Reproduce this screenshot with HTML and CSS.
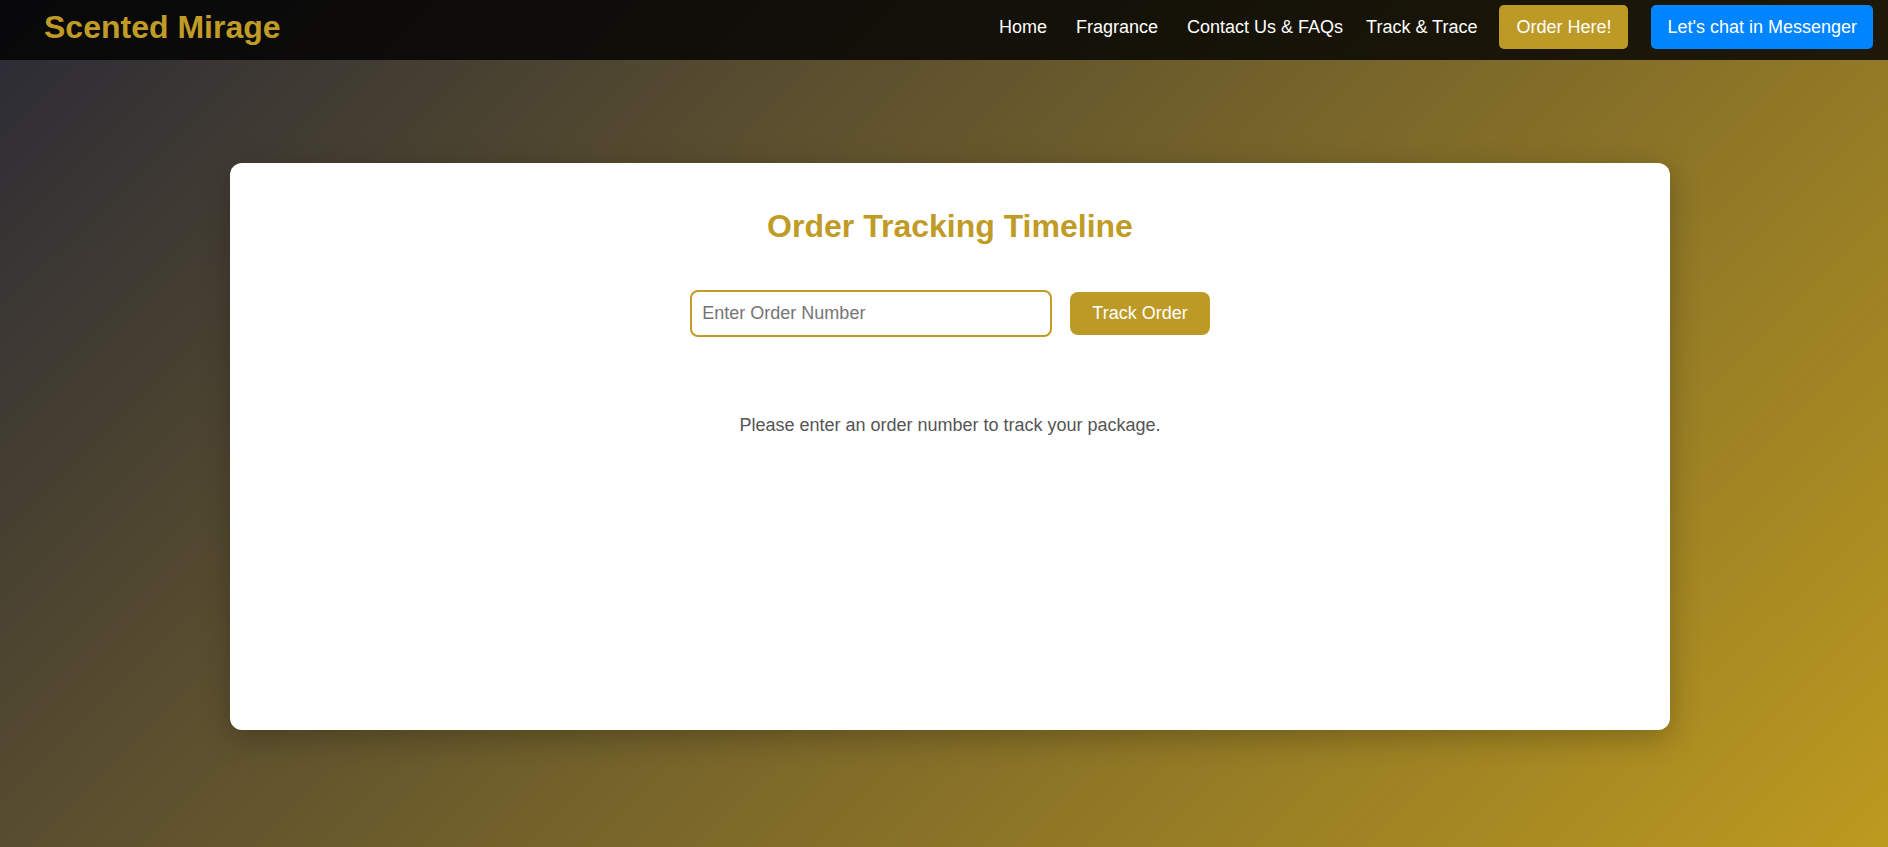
FILE: index.html
```html
<!DOCTYPE html>
<html lang="en">
<head>
<meta charset="UTF-8">
<title>Scented Mirage - Track &amp; Trace</title>
<link rel="stylesheet" href="styles.css">
</head>
<body>
<header class="site-header">
  <a class="logo" href="#">Scented Mirage</a>
  <nav class="nav">
    <a class="nav-link" href="#">Home</a>
    <a class="nav-link nav-link-wide" href="#">Fragrance</a>
    <a class="nav-link nav-link-wide" href="#">Contact Us &amp; FAQs</a>
    <a class="nav-link" href="#">Track &amp; Trace</a>
    <a class="btn-order" href="#">Order Here!</a>
    <a class="btn-messenger" href="#">Let's chat in Messenger</a>
  </nav>
</header>
<main class="main">
  <section class="card">
    <h2 class="card-title">Order Tracking Timeline</h2>
    <form class="track-form">
      <input class="order-input" type="text" placeholder="Enter Order Number">
      <button class="track-btn" type="button">Track Order</button>
    </form>
    <p class="message">Please enter an order number to track your package.</p>
  </section>
</main>
</body>
</html>
```
FILE: styles.css
```css
html, body {
  margin: 0;
  padding: 0;
  min-height: 100%;
}
body {
  font-family: "Liberation Sans", Arial, sans-serif;
  min-height: 100vh;
  background: linear-gradient(135deg, #2a2a36 0%, #bd9a1f 100%);
  background-attachment: fixed;
}
.site-header {
  height: 60px;
  box-sizing: border-box;
  padding: 5px 15px 11px 44px;
  display: flex;
  align-items: center;
  justify-content: space-between;
  background: rgba(0, 0, 0, 0.8);
}
.logo {
  font-size: 32px;
  font-weight: bold;
  color: #c09b26;
  text-decoration: none;
}
.nav {
  display: flex;
  align-items: center;
}
.nav-link {
  color: #fff;
  text-decoration: none;
  font-size: 18px;
  margin-left: 23px;
}
.nav-link:first-child { margin-left: 0; }
.nav-link-wide { margin-left: 29px; }
.btn-order,
.btn-messenger {
  display: inline-flex;
  align-items: center;
  height: 44px;
  box-sizing: border-box;
  padding: 0 17px;
  border-radius: 5px;
  color: #fff;
  text-decoration: none;
  font-size: 18px;
}
.btn-order {
  background: #bd9a25;
  margin-left: 22px;
}
.btn-messenger {
  background: #0084ff;
  margin-left: 23px;
  padding: 0 16px;
}
.main {
  padding: 103px 0 60px 12px;
}
.card {
  max-width: 1440px;
  min-height: 567px;
  box-sizing: border-box;
  margin: 0 auto;
  padding: 45px 40px 40px;
  background: #fff;
  border-radius: 12px;
  box-shadow: 0 8px 30px rgba(0, 0, 0, 0.25);
  text-align: center;
}
.card-title {
  margin: 0 0 45px;
  font-size: 32px;
  font-weight: bold;
  color: #c09b26;
}
.track-form {
  display: flex;
  justify-content: center;
  align-items: center;
  gap: 18px;
  margin: 0;
}
.order-input {
  width: 362px;
  height: 47px;
  box-sizing: border-box;
  padding: 0 10px;
  border: 2px solid #c09b26;
  border-radius: 8px;
  font-family: "Liberation Sans", Arial, sans-serif;
  font-size: 18px;
  color: #333;
  outline: none;
}
.order-input::placeholder {
  color: #757575;
}
.track-btn {
  height: 43px;
  padding: 0 22px;
  border: none;
  border-radius: 8px;
  background: #bd9a25;
  color: #fff;
  font-family: "Liberation Sans", Arial, sans-serif;
  font-size: 18px;
  cursor: pointer;
}
.message {
  margin: 78px 0 0;
  font-size: 18px;
  color: #555;
}
```
